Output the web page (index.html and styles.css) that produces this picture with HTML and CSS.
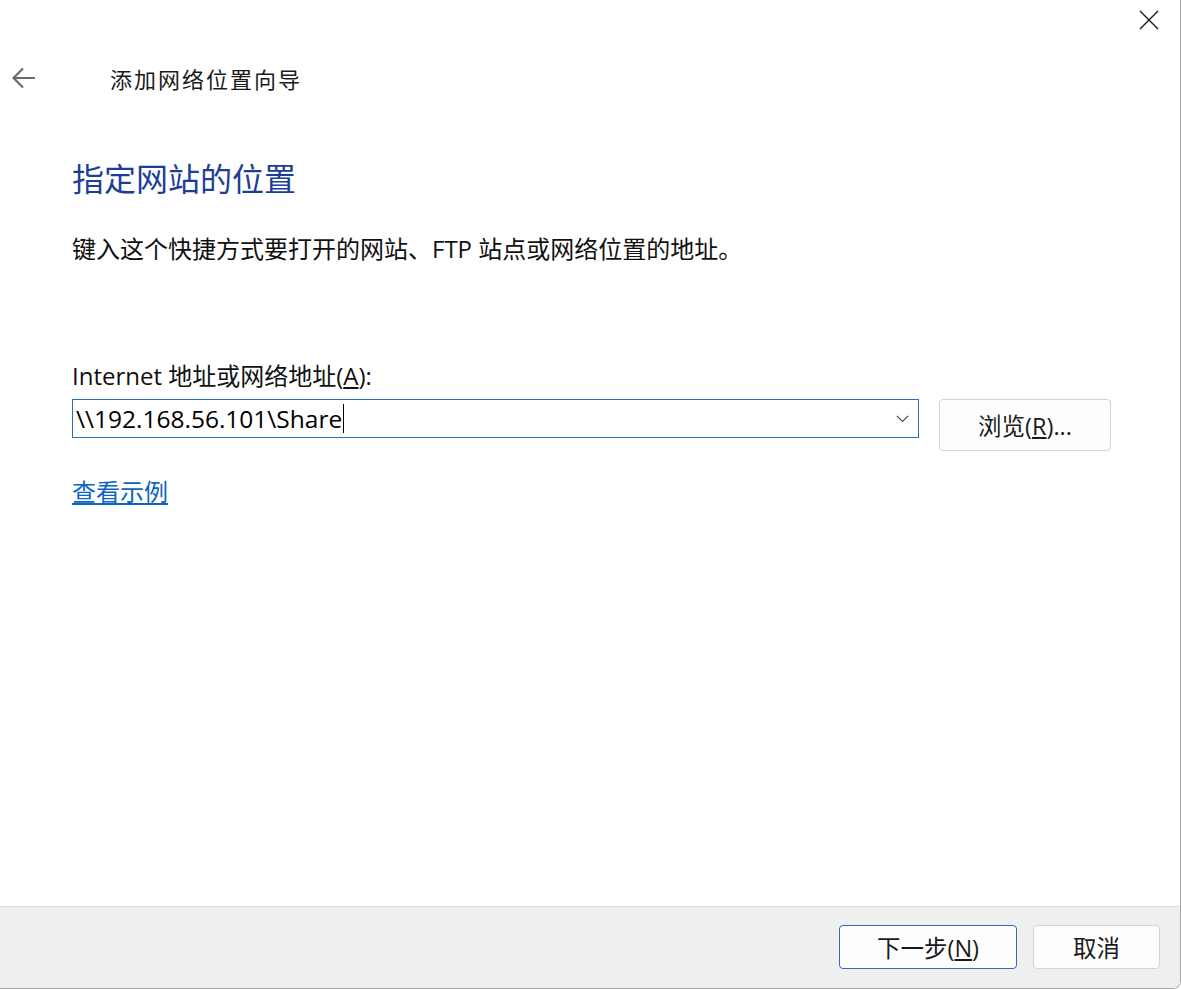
FILE: index.html
```html
<!DOCTYPE html>
<html lang="zh-CN">

<head>
    <meta charset="UTF-8">
    <title>添加网络位置向导</title>
    <link rel="stylesheet" href="styles.css">
</head>

<body>
    <div class="window">
        <div class="titlebar">
            <button class="close-btn" aria-label="关闭">
                <svg width="20" height="20" viewBox="0 0 20 20">
                    <path d="M1 1 L19 19 M19 1 L1 19" stroke="#1a1a1a" stroke-width="1.4" fill="none" />
                </svg>
            </button>
        </div>

        <div class="nav">
            <svg class="back" width="24" height="22" viewBox="0 0 24 22">
                <path d="M23 11 H2 M11 1.5 L1.5 11 L11 20.5" stroke="#6b6b6b" stroke-width="2.2" fill="none" />
            </svg>
            <span class="nav-title">添加网络位置向导</span>
        </div>

        <main class="content">
            <h1 class="instruction">指定网站的位置</h1>
            <p class="description">键入这个快捷方式要打开的网站、FTP 站点或网络位置的地址。</p>

            <label class="field-label">Internet 地址或网络地址(<u>A</u>):</label>
            <div class="field-row">
                <div class="combo">
                    <span class="combo-text">\\192.168.56.101\Share</span><span class="caret"></span>
                    <svg class="chevron" width="13" height="8" viewBox="0 0 13 8">
                        <path d="M0.8 0.8 L6.5 6.5 L12.2 0.8" stroke="#4a4a4a" stroke-width="1.2" fill="none" />
                    </svg>
                </div>
                <button class="btn browse">浏览(<u>R</u>)...</button>
            </div>

            <a class="example-link" href="#">查看示例</a>
        </main>

        <footer class="footer">
            <button class="btn btn-primary">下一步(<u>N</u>)</button>
            <button class="btn btn-cancel">取消</button>
        </footer>
    </div>
</body>

</html>
```

FILE: styles.css
```css
* {
    margin: 0;
    padding: 0;
    box-sizing: border-box;
}

html,
body {
    height: 100%;
    background: #fff;
}

body {
    font-family: "Open Sans", "Noto Sans CJK SC", sans-serif;
    color: #000;
    overflow: hidden;
}

.window {
    width: 1181px;
    height: 989px;
    display: flex;
    flex-direction: column;
    background: #fff;
    border-right: 1px solid #a6a6a6;
    border-bottom: 1px solid #a6a6a6;
    border-bottom-right-radius: 8px;
    overflow: hidden;
}

.titlebar {
    height: 40px;
    display: flex;
    justify-content: flex-end;
    align-items: center;
    padding-right: 21px;
}

.close-btn {
    width: 20px;
    height: 20px;
    border: none;
    background: none;
    display: flex;
}

.nav {
    margin-top: 18px;
    height: 40px;
    display: flex;
    align-items: center;
    padding-left: 12px;
}

.back {
    margin-right: 74px;
}

.nav-title {
    font-size: 22px;
    color: #1a1a1a;
    letter-spacing: 2px;
}

.content {
    flex: 1;
    padding-left: 72px;
    display: flex;
    flex-direction: column;
    align-items: flex-start;
}

.instruction {
    margin-top: 59px;
    font-size: 32px;
    line-height: 44px;
    font-weight: normal;
    color: #1c3f95;
}

.description {
    margin-top: 32px;
    font-size: 24px;
    line-height: 32px;
    color: #111;
}

.field-label {
    margin-top: 95px;
    font-size: 24px;
    line-height: 32px;
    color: #111;
}

.field-row {
    margin-top: 7px;
    display: flex;
    align-items: flex-start;
    gap: 20px;
}

.combo {
    width: 847px;
    height: 39px;
    border: 1px solid #2a6cbf;
    display: flex;
    align-items: center;
    padding-left: 3px;
    position: relative;
}

.combo-text {
    font-size: 24.5px;
    line-height: 30px;
    color: #000;
}

.caret {
    width: 1px;
    height: 29px;
    background: #000;
    margin-left: 1px;
}

.chevron {
    position: absolute;
    right: 9px;
    top: 15px;
}

.btn {
    font-family: "Open Sans", "Noto Sans CJK SC", sans-serif;
    font-size: 23.5px;
    color: #1a1a1a;
    background: #fdfdfd;
    border: 1px solid #d4d4d4;
    border-radius: 4px;
}

.browse {
    width: 172px;
    height: 52px;
}

.example-link {
    margin-top: 25px;
    font-size: 24px;
    line-height: 32px;
    color: #0a66c2;
}

.footer {
    height: 82px;
    background: #efefef;
    border-top: 1px solid #dcdcdc;
    display: flex;
    justify-content: flex-end;
    align-items: flex-start;
    gap: 16px;
    padding: 18px 20px 0 0;
}

.btn-primary {
    width: 178px;
    height: 44px;
    border-color: #2a6cbf;
}

.btn-cancel {
    width: 127px;
    height: 44px;
}
```
